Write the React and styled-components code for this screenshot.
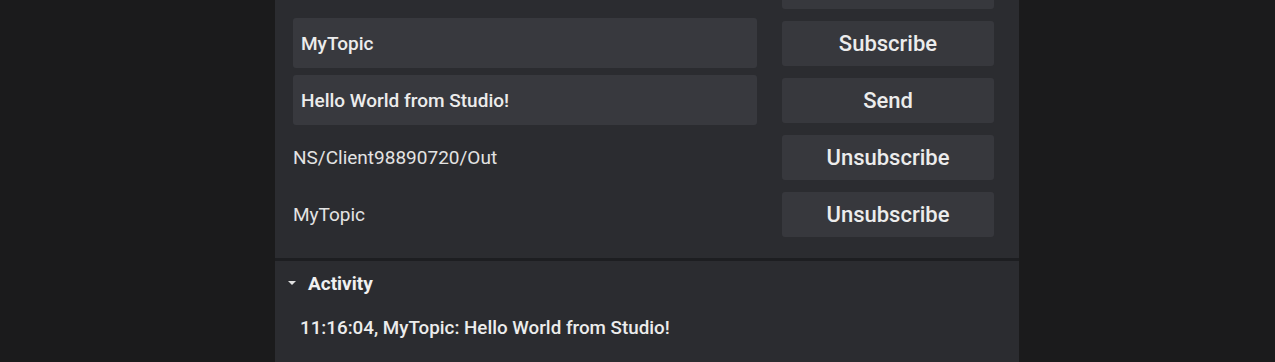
import styled, { createGlobalStyle } from "styled-components";

const Global = createGlobalStyle`
  html, body {
    margin: 0;
    padding: 0;
    background: #1b1b1c;
    font-family: Roboto, "Liberation Sans", sans-serif;
    overflow: hidden;
  }
`;

const Page = styled.div`
  height: 362px;
  padding-left: 275px;
  overflow: hidden;
`;

const Panel = styled.div`
  width: 744px;
  height: 100%;
  background: #2b2c30;
  display: flex;
  flex-direction: column;
`;

const Rows = styled.div`
  margin-top: -39px;
  padding: 0 25px 19px 18px;
  display: flex;
  flex-direction: column;
  gap: 7px;
`;

const Row = styled.div`
  display: grid;
  grid-template-columns: 1fr 212px;
  column-gap: 25px;
  align-items: center;
  height: 50px;
`;

const Input = styled.input`
  height: 50px;
  box-sizing: border-box;
  border: none;
  border-radius: 3px;
  background: #38393e;
  color: #ececec;
  font: 500 19px Roboto, "Liberation Sans", sans-serif;
  padding: 0 8px;
  outline: none;
`;

const Label = styled.div`
  color: #e3e3e3;
  font-size: 19px;
`;

const Button = styled.button`
  height: 45px;
  border: none;
  border-radius: 3px;
  background: #37383d;
  color: #ececec;
  font: 500 22px Roboto, "Liberation Sans", sans-serif;
  cursor: pointer;
`;

const Divider = styled.div`
  height: 3px;
  background: #1d1e21;
`;

const Section = styled.div`
  padding: 0 18px 0 13px;
`;

const SectionHeader = styled.div`
  display: flex;
  align-items: center;
  gap: 12px;
  height: 44px;
  color: #f0f0f0;
  font-size: 19px;
  font-weight: 700;
`;

const Caret = styled.span`
  width: 0;
  height: 0;
  border-left: 4px solid transparent;
  border-right: 4px solid transparent;
  border-top: 4px solid #e0e0e0;
`;

const Entry = styled.div`
  padding: 12px 0 0 12px;
  color: #ececec;
  font-size: 18.8px;
  font-weight: 500;
`;

const topics = [
  { kind: "label", text: "Reply topic (default)", action: "Subscribe" },
  { kind: "input", text: "MyTopic", action: "Subscribe" },
  { kind: "input", text: "Hello World from Studio!", action: "Send" },
  { kind: "label", text: "NS/Client98890720/Out", action: "Unsubscribe" },
  { kind: "label", text: "MyTopic", action: "Unsubscribe" },
];

const App = () => {
  return (
    <Page>
      <Global />
      <Panel>
        <Rows>
          {topics.map((t, i) => (
            <Row key={i}>
              {t.kind === "input" ? (
                <Input defaultValue={t.text} />
              ) : (
                <Label>{t.text}</Label>
              )}
              <Button>{t.action}</Button>
            </Row>
          ))}
        </Rows>
        <Divider />
        <Section>
          <SectionHeader>
            <Caret />
            Activity
          </SectionHeader>
          <Entry>11:16:04, MyTopic: Hello World from Studio!</Entry>
        </Section>
      </Panel>
    </Page>
  );
};

export default App;
